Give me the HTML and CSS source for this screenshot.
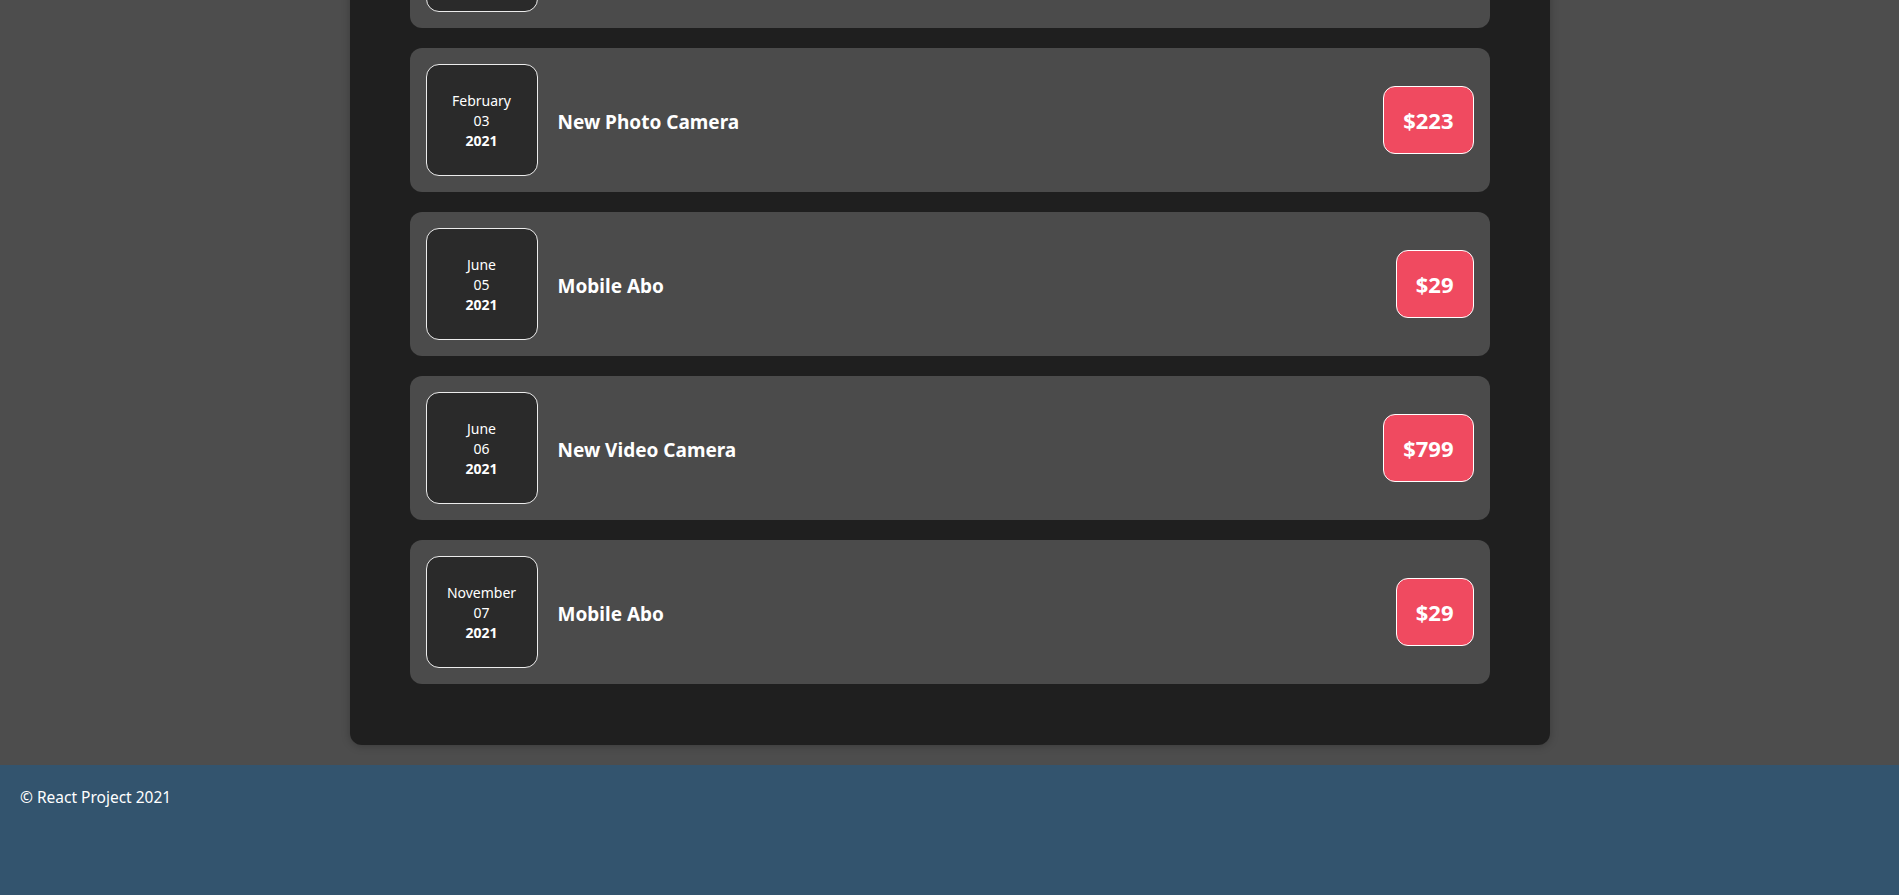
FILE: index.html
```html
<!DOCTYPE html>
<html lang="en">
<head>
<meta charset="utf-8">
<title>Expenses</title>
<link rel="stylesheet" href="styles.css">
</head>
<body>
<main class="main">
  <section class="expenses">
    <ul class="list">
      <li class="item item-cut">
        <div class="date"></div>
      </li>
      <li class="item">
        <div class="date"><span class="month">February</span><span class="day">03</span><span class="year">2021</span></div>
        <h2 class="title">New Photo Camera</h2>
        <div class="price">$223</div>
      </li>
      <li class="item">
        <div class="date"><span class="month">June</span><span class="day">05</span><span class="year">2021</span></div>
        <h2 class="title">Mobile Abo</h2>
        <div class="price">$29</div>
      </li>
      <li class="item">
        <div class="date"><span class="month">June</span><span class="day">06</span><span class="year">2021</span></div>
        <h2 class="title">New Video Camera</h2>
        <div class="price">$799</div>
      </li>
      <li class="item">
        <div class="date"><span class="month">November</span><span class="day">07</span><span class="year">2021</span></div>
        <h2 class="title">Mobile Abo</h2>
        <div class="price">$29</div>
      </li>
    </ul>
  </section>
</main>
<footer class="footer">© React Project 2021</footer>
</body>
</html>
```
FILE: styles.css
```css
* { box-sizing: border-box; }
html, body { margin: 0; padding: 0; }
body {
  background: #4d4d4d;
  font-family: "Noto Sans", "Open Sans", sans-serif;
  color: #fff;
  overflow: hidden;
}
.main {
  margin-top: -116px;
}
.expenses {
  width: 1200px;
  margin: 0 auto;
  background: #1f1f1f;
  border-radius: 12px;
  padding: 0 0 61px;
  box-shadow: 0 1px 8px rgba(0, 0, 0, 0.25);
}
.list {
  list-style: none;
  margin: 0;
  padding: 0;
  display: flex;
  flex-direction: column;
  gap: 20px;
}
.item {
  width: 1080px;
  margin: 0 auto;
  height: 144px;
  background: #4b4b4b;
  border-radius: 12px;
  padding: 16px;
  display: flex;
  align-items: center;
  gap: 20px;
}
.date {
  width: 112px;
  height: 112px;
  flex: none;
  background: #2a2a2a;
  border: 1px solid #ececec;
  border-radius: 13px;
  display: flex;
  flex-direction: column;
  align-items: center;
  justify-content: center;
  font-size: 14px;
  line-height: 20px;
  padding-top: 2px;
}
.year { font-weight: 700; }
.title {
  flex: 1;
  margin: 0;
  font-size: 19px;
  font-weight: 700;
  padding-top: 3px;
}
.price {
  flex: none;
  background: #f04a60;
  border: 1px solid #fff;
  border-radius: 12px;
  height: 68px;
  padding: 0 19px;
  display: flex;
  align-items: center;
  font-size: 22px;
  font-weight: 700;
}
.footer {
  margin-top: 20px;
  background: #33546e;
  height: 131px;
  padding: 20px 20px;
  font-size: 15.5px;
  line-height: 24px;
}
```
